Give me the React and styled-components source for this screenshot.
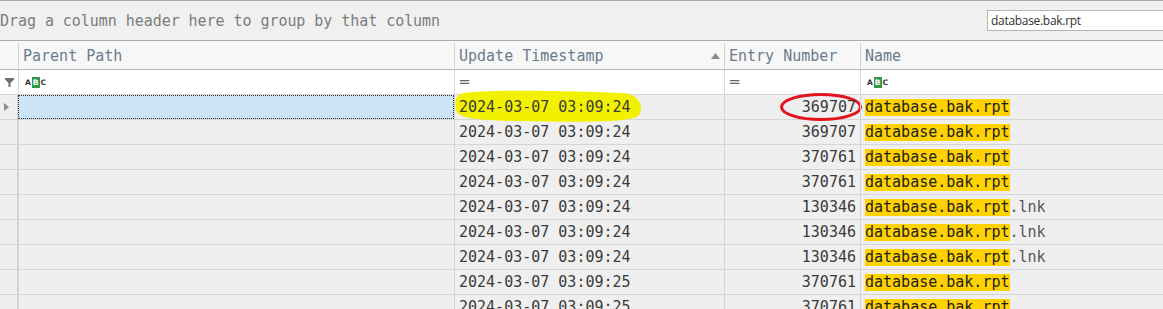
import React from 'react';
import styled, { createGlobalStyle } from 'styled-components';

const GlobalStyle = createGlobalStyle`
  html, body {
    margin: 0;
    padding: 0;
    background: #efefef;
    overflow: hidden;
  }
  body {
    font-family: "DejaVu Sans Mono", "Liberation Mono", monospace;
  }
`

const MONO = `"DejaVu Sans Mono", "Liberation Mono", monospace`;
const COLS = '18px 436px 270px 136px 1fr';

const Page = styled.div`
  width: 1163px;
  height: 309px;
  overflow: hidden;
  background: #efefef;
`

const GroupPanel = styled.div`
  height: 38px;
  border-top: 1px solid #ababab;
  border-bottom: 1px solid #ababab;
  background: #f0f0f0;
  display: flex;
  align-items: center;
  justify-content: space-between;
  font-family: ${MONO};
  font-size: 15px;
  color: #7c7c7c;
  padding-top: 1px;
`

const GroupHint = styled.span`
  letter-spacing: -0.05px;
`

const SearchBox = styled.div`
  width: 175px;
  height: 19px;
  margin-top: -2px;
  margin-right: -4px;
  border: 1px solid #b4b4b4;
  background: #fff;
  font-family: "Open Sans", "Noto Sans", sans-serif;
  font-size: 12px;
  line-height: 19px;
  color: #303030;
  padding-left: 3px;
  letter-spacing: -0.3px;
`

const Row = styled.div`
  display: grid;
  grid-template-columns: ${COLS};
  height: ${p => p.h}px;
  background: ${p => p.bg};
  border-bottom: 1px solid ${p => p.line};
`

const HeadCell = styled.div`
  display: flex;
  align-items: center;
  justify-content: space-between;
  padding: 0 4px;
  font-size: 15px;
  color: #6b7b8c;
  margin: 2px 0 1px;
  border-left: ${p => p.first ? 'none' : '1px solid #d0d0d0'};
`

const FilterCell = styled.div`
  display: flex;
  align-items: center;
  justify-content: ${p => p.center ? 'center' : 'flex-start'};
  padding: 0 ${p => p.center ? 0 : 5}px;
  border-left: ${p => p.first ? 'none' : '1px solid #d9d9d9'};
  color: #666;
  font-size: 15px;
`

const Cell = styled.div`
  position: relative;
  display: flex;
  align-items: center;
  justify-content: ${p => p.right ? 'flex-end' : 'flex-start'};
  padding: 0 4px;
  font-size: 15px;
  color: #3a3a3a;
  border-left: ${p => p.first ? 'none' : '1px solid #d5d5d5'};
  background: ${p => p.selected ? '#cce4f7' : 'transparent'};
  outline: ${p => p.selected ? '1px dotted #333' : 'none'};
  outline-offset: -1px;
  white-space: nowrap;
`

const Mark = styled.span`
  background: #ffd200;
  color: #222;
  line-height: 17px;
`

const Rest = styled.span`
  color: #555;
`

const Indicator = styled.div`
  display: flex;
  align-items: center;
  padding-left: 4px;
  border-right: 1px solid #d0d0d0;
`

const Abc = styled.span`
  display: inline-flex;
  align-items: center;
  font-family: "DejaVu Sans", sans-serif;
  font-size: 7.5px;
  font-weight: bold;
  color: #333;
  span {
    padding: 0 1px;
  }
  b {
    background: #2f9a4a;
    color: #fff;
    padding: 1px 1px;
  }
`

const Overlay = styled.svg`
  position: absolute;
  pointer-events: none;
  overflow: visible;
`

const SortArrow = () => (
  <svg width="9" height="6" viewBox="0 0 9 6"><path d="M0 6 L4.5 0 L9 6 Z" fill="#8a8a8a" /></svg>
);

const Funnel = () => (
  <svg width="9" height="9" viewBox="0 0 9 9"><path d="M0 0 H9 V1.5 L5.5 5 V9 H3.5 V5 L0 1.5 Z" fill="#6f6f6f" /></svg>
);

const RowArrow = () => (
  <svg width="5" height="8" viewBox="0 0 5 8"><path d="M0 0 L5 4 L0 8 Z" fill="#8c8c8c" /></svg>
);

const AbcIcon = () => (
  <Abc><span>A</span><b>B</b><span>C</span></Abc>
);

const rows = [
  ['2024-03-07 03:09:24', '369707', ''],
  ['2024-03-07 03:09:24', '369707', ''],
  ['2024-03-07 03:09:24', '370761', ''],
  ['2024-03-07 03:09:24', '370761', ''],
  ['2024-03-07 03:09:24', '130346', '.lnk'],
  ['2024-03-07 03:09:24', '130346', '.lnk'],
  ['2024-03-07 03:09:24', '130346', '.lnk'],
  ['2024-03-07 03:09:25', '370761', ''],
  ['2024-03-07 03:09:25', '370761', ''],
];

export default function App() {
  return (
    <Page>
      <GlobalStyle />
      <GroupPanel>
        <GroupHint>Drag a column header here to group by that column</GroupHint>
        <SearchBox>database.bak.rpt</SearchBox>
      </GroupPanel>

      <Row h={28} bg="#f7f7f7" line="#b9b9b9">
        <HeadCell first />
        <HeadCell>Parent Path</HeadCell>
        <HeadCell>Update Timestamp <SortArrow /></HeadCell>
        <HeadCell>Entry Number</HeadCell>
        <HeadCell>Name</HeadCell>
      </Row>

      <Row h={24} bg="#fff" line="#d5d5d5">
        <FilterCell first center><Funnel /></FilterCell>
        <FilterCell><AbcIcon /></FilterCell>
        <FilterCell>═</FilterCell>
        <FilterCell>═</FilterCell>
        <FilterCell><AbcIcon /></FilterCell>
      </Row>

      {rows.map((r, i) => (
        <Row key={i} h={24} bg="#efefef" line="#d6d6d6">
          <Indicator>{i === 0 && <RowArrow />}</Indicator>
          <Cell selected={i === 0} />
          <Cell>
            {i === 0 && (
              <Overlay style={{ left: -1, top: -5 }} width="190" height="33" viewBox="0 0 190 33">
                <path d="M10 3 C40 -1 120 1 170 3 C186 5 191 18 184 26 C176 33 120 32 60 31 C25 30 4 29 2 20 C0 10 3 4 10 3 Z" fill="#f2f200" />
              </Overlay>
            )}
            <span style={{ position: 'relative' }}>{r[0]}</span>
          </Cell>
          <Cell right>
            {i === 0 && (
              <Overlay style={{ left: 55, top: -2 }} width="82" height="28" viewBox="0 0 82 28">
                <ellipse cx="41" cy="14" rx="39.5" ry="12.5" fill="none" stroke="#e3141c" strokeWidth="3" />
              </Overlay>
            )}
            <span style={{ position: 'relative' }}>{r[1]}</span>
          </Cell>
          <Cell>
            <Mark>database.bak.rpt</Mark>
            {r[2] && <Rest>{r[2]}</Rest>}
          </Cell>
        </Row>
      ))}
    </Page>
  );
}
